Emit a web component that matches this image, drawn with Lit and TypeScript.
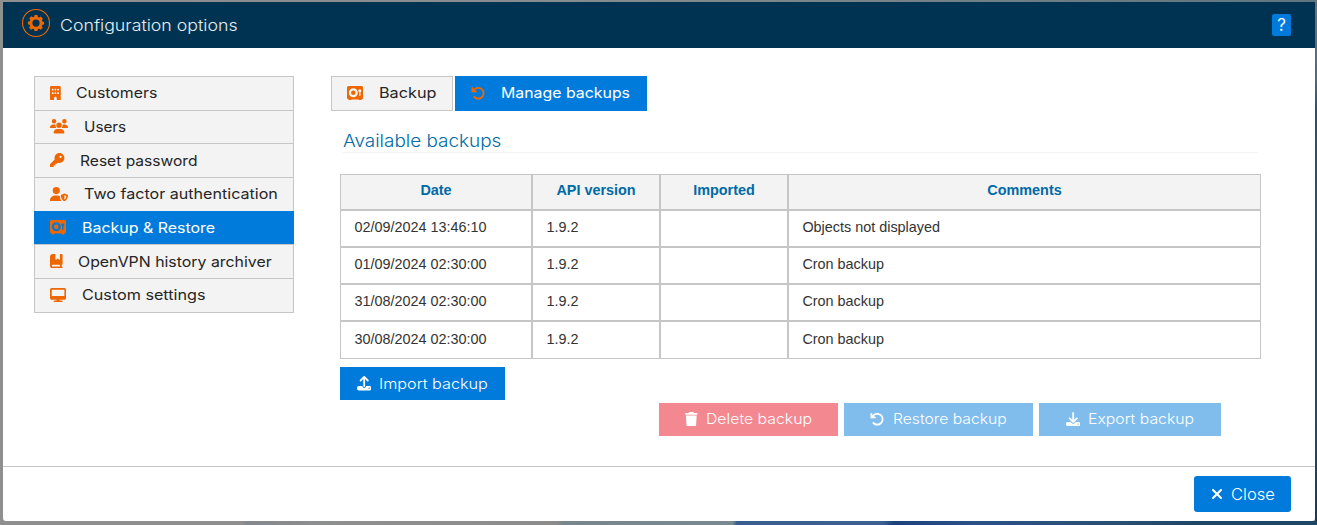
import { LitElement, html, svg, css } from "lit";
import { customElement, property } from "lit/decorators.js";
import { classMap } from "lit/directives/class-map.js";

type Icon = { w: number; h?: number; d: string };

const ICONS: Record<string, Icon> = {
  building: { w: 384, d: "M48 0C21.5 0 0 21.5 0 48V464c0 26.5 21.5 48 48 48h96V432c0-26.5 21.5-48 48-48s48 21.5 48 48v80h96c26.5 0 48-21.5 48-48V48c0-26.5-21.5-48-48-48H48zM64 240c0-8.8 7.2-16 16-16h32c8.8 0 16 7.2 16 16v32c0 8.8-7.2 16-16 16H80c-8.8 0-16-7.2-16-16V240zm112-16h32c8.8 0 16 7.2 16 16v32c0 8.8-7.2 16-16 16H176c-8.8 0-16-7.2-16-16V240c0-8.8 7.2-16 16-16zm80 16c0-8.8 7.2-16 16-16h32c8.8 0 16 7.2 16 16v32c0 8.8-7.2 16-16 16H272c-8.8 0-16-7.2-16-16V240zM80 96h32c8.8 0 16 7.2 16 16v32c0 8.8-7.2 16-16 16H80c-8.8 0-16-7.2-16-16V112c0-8.8 7.2-16 16-16zm80 16c0-8.8 7.2-16 16-16h32c8.8 0 16 7.2 16 16v32c0 8.8-7.2 16-16 16H176c-8.8 0-16-7.2-16-16V112zM272 96h32c8.8 0 16 7.2 16 16v32c0 8.8-7.2 16-16 16H272c-8.8 0-16-7.2-16-16V112c0-8.8 7.2-16 16-16z" },
  users: { w: 640, d: "M144 0a80 80 0 1 1 0 160A80 80 0 1 1 144 0zM512 0a80 80 0 1 1 0 160A80 80 0 1 1 512 0zM0 298.7C0 239.8 47.8 192 106.7 192h42.7c15.9 0 31 3.5 44.6 9.7c-1.3 7.2-1.9 14.7-1.9 22.3c0 38.2 16.8 72.5 43.3 96c-.2 0-.4 0-.7 0H21.3C9.6 320 0 310.4 0 298.7zM405.3 320c-.2 0-.4 0-.7 0c26.6-23.5 43.3-57.8 43.3-96c0-7.6-.7-15-1.9-22.3c13.6-6.3 28.7-9.7 44.6-9.7h42.7C592.2 192 640 239.8 640 298.7c0 11.8-9.6 21.3-21.3 21.3H405.3zM224 224a96 96 0 1 1 192 0 96 96 0 1 1 -192 0zM128 485.3C128 411.7 187.7 352 261.3 352H378.7C452.3 352 512 411.7 512 485.3c0 14.7-11.9 26.7-26.7 26.7H154.7c-14.7 0-26.7-11.9-26.7-26.7z" },
  key: { w: 512, d: "M336 352c97.2 0 176-78.8 176-176S433.2 0 336 0S160 78.8 160 176c0 18.7 2.9 36.8 8.3 53.7L7 391c-4.5 4.5-7 10.6-7 17v80c0 13.3 10.7 24 24 24h80c13.3 0 24-10.7 24-24V448h40c13.3 0 24-10.7 24-24V384h40c6.4 0 12.5-2.5 17-7l33.3-33.3c16.9 5.4 35 8.3 53.7 8.3zM376 96a40 40 0 1 1 0 80 40 40 0 1 1 0-80z" },
  userShield: { w: 640, d: "M224 0a128 128 0 1 1 0 256a128 128 0 1 1 0-256zM178 304h92c32 0 62 8 88 23v26c0 64 23 119 72 159H30c-17 0-30-13-30-30C0 384 80 304 178 304zM512 228l118 46c6 2 10 8 10 14c0 91-34 177-120 222c-5 3-11 3-16 0c-86-45-120-131-120-222c0-6 4-12 10-14zM512 292v154c42-26 62-70 65-128z" },
  vault: { w: 576, d: "M64 0C28.7 0 0 28.7 0 64V416c0 35.3 28.7 64 64 64l16 32h64l16-32H416l16 32h64l16-32c35.3 0 64-28.7 64-64V64c0-35.3-28.7-64-64-64H64zM224 80a160 160 0 1 1 0 320a160 160 0 1 1 0-320zM224 160a80 80 0 1 0 0 160a80 80 0 1 0 0-160zM480 221V336c0 9-7 16-16 16s-32-7-32-16V221c-19-10-32-31-32-53a56 56 0 1 1 112 0c0 22-13 43-32 53z" },
  book: { w: 448, d: "M0 96C0 43 43 0 96 0h96V190.7c0 13.4 15.5 20.9 26 12.5L272 160l54 43.2c10.5 8.4 26 .9 26-12.5V0h32 32c17.7 0 32 14.3 32 32V352c0 17.7-14.3 32-32 32v64c17.7 0 32 14.3 32 32s-14.3 32-32 32H384 96c-53 0-96-43-96-96V96zM64 416c0 17.7 14.3 32 32 32H352V384H96c-17.7 0-32 14.3-32 32z" },
  desktop: { w: 576, d: "M64 0C28.7 0 0 28.7 0 64V352c0 35.3 28.7 64 64 64H240l-10.7 32H160c-17.7 0-32 14.3-32 32s14.3 32 32 32H416c17.7 0 32-14.3 32-32s-14.3-32-32-32H346.7L336 416H512c35.3 0 64-28.7 64-64V64c0-35.3-28.7-64-64-64H64zM512 64V288H64V64H512z" },
  rotate: { w: 512, d: "M125.7 160H176c17.7 0 32 14.3 32 32s-14.3 32-32 32H48c-17.7 0-32-14.3-32-32V64c0-17.7 14.3-32 32-32s32 14.3 32 32v51.2L97.6 97.6c87.5-87.5 229.3-87.5 316.8 0s87.5 229.3 0 316.8s-229.3 87.5-316.8 0c-12.5-12.5-12.5-32.8 0-45.3s32.8-12.5 45.3 0c62.5 62.5 163.8 62.5 226.3 0s62.5-163.8 0-226.3s-163.8-62.5-226.3 0L125.7 160z" },
  trash: { w: 448, d: "M135.2 17.7L128 32H32C14.3 32 0 46.3 0 64S14.3 96 32 96H416c17.7 0 32-14.3 32-32s-14.3-32-32-32H320l-7.2-14.3C307.4 6.8 296.3 0 284.2 0H163.8c-12.1 0-23.2 6.8-28.6 17.7zM416 128H32L53.2 467c1.6 25.3 22.6 45 47.9 45H346.9c25.3 0 46.3-19.7 47.9-45L416 128z" },
  upload: { w: 512, d: "M288 109.3V352c0 17.7-14.3 32-32 32s-32-14.3-32-32V109.3l-73.4 73.4c-12.5 12.5-32.8 12.5-45.3 0s-12.5-32.8 0-45.3l128-128c12.5-12.5 32.8-12.5 45.3 0l128 128c12.5 12.5 12.5 32.8 0 45.3s-32.8 12.5-45.3 0L288 109.3zM64 352H192c0 35.3 28.7 64 64 64s64-28.7 64-64H448c35.3 0 64 28.7 64 64v32c0 35.3-28.7 64-64 64H64c-35.3 0-64-28.7-64-64V416c0-35.3 28.7-64 64-64zM432 456a24 24 0 1 0 0-48 24 24 0 1 0 0 48z" },
  download: { w: 512, d: "M288 32c0-17.7-14.3-32-32-32s-32 14.3-32 32V274.7l-73.4-73.4c-12.5-12.5-32.8-12.5-45.3 0s-12.5 32.8 0 45.3l128 128c12.5 12.5 32.8 12.5 45.3 0l128-128c12.5-12.5 12.5-32.8 0-45.3s-32.8-12.5-45.3 0L288 274.7V32zM64 352c-35.3 0-64 28.7-64 64v32c0 35.3 28.7 64 64 64H448c35.3 0 64-28.7 64-64V416c0-35.3-28.7-64-64-64H346.5l-45.3 45.3c-25 25-65.5 25-90.5 0L165.5 352H64zm368 56a24 24 0 1 1 0 48 24 24 0 1 1 0-48z" },
  xmark: { w: 384, d: "M342.6 150.6c12.5-12.5 12.5-32.8 0-45.3s-32.8-12.5-45.3 0L192 210.7 86.6 105.4c-12.5-12.5-32.8-12.5-45.3 0s-12.5 32.8 0 45.3L146.7 256 41.4 361.4c-12.5 12.5-12.5 32.8 0 45.3s32.8 12.5 45.3 0L192 301.3 297.4 406.6c12.5 12.5 32.8 12.5 45.3 0s12.5-32.8 0-45.3L237.3 256 342.6 150.6z" },
};

@customElement("ui-icon")
class UiIcon extends LitElement {
  @property() name = "";
  @property({ type: Number }) size = 14.4;
  static styles = css`
    :host { display: block; flex: none; line-height: 0; }
    .glyph { display: block; fill: currentColor; fill-rule: evenodd; }
  `;
  render() {
    const i = ICONS[this.name];
    return html`<svg class="glyph" width=${(this.size * i.w) / 512} height=${this.size} viewBox="0 0 ${i.w} 512">
      ${svg`<path d=${i.d}></path>`}
    </svg>`;
  }
}

/* A one-line label whose glyphs stretch to an exact advance width. */
@customElement("fit-label")
class FitLabel extends LitElement {
  @property() text = "";
  @property({ type: Number }) width = 0;
  static styles = css`
    :host { display: block; flex: none; white-space: nowrap; }
    .text { display: inline-block; transform-origin: 0 50%; }
  `;
  render() {
    return html`<span class="text">${this.text}</span>`;
  }
  updated() {
    const el = this.renderRoot.querySelector(".text") as HTMLElement;
    this.style.width = `${this.width}px`;
    el.style.transform = `scaleX(${this.width / el.offsetWidth})`;
  }
}

const MENU = [
  { icon: "building", text: "Customers", width: 81.5 },
  { icon: "users", text: "Users", width: 42.5 },
  { icon: "key", text: "Reset password", width: 118 },
  { icon: "userShield", text: "Two factor authentication", width: 193.5 },
  { icon: "vault", text: "Backup & Restore", width: 133 },
  { icon: "book", text: "OpenVPN history archiver", width: 194 },
  { icon: "desktop", text: "Custom settings", width: 123.5 },
];
const ACTIVE = "Backup & Restore";

const COLUMNS = ["Date", "API version", "Imported", "Comments"];
const ROWS = [
  ["02/09/2024 13:46:10", "1.9.2", "", "Objects not displayed"],
  ["01/09/2024 02:30:00", "1.9.2", "", "Cron backup"],
  ["31/08/2024 02:30:00", "1.9.2", "", "Cron backup"],
  ["30/08/2024 02:30:00", "1.9.2", "", "Cron backup"],
];

@customElement("app-root")
class AppRoot extends LitElement {
  static styles = css`
    :host {
      display: block;
      box-sizing: border-box;
      height: 525px;
      padding: 2px 2px 4px 3px;
      overflow: hidden;
      font-family: Inter, sans-serif;
      font-size: 14.4px;
      color: #262626;
      background:
        linear-gradient(100deg, #8f8f8f 238px, #83898e 244px, #8f8f8f 330px, #8c8c8c 548px, #78858d 556px, #7b8990 722px, #3a5f8f 726px, #3c6090 870px, #1c437b 880px, #2a5286 960px, #2a4f74 1100px, #1d4565 1190px, #1d4565 1317px) 0 100% / 100% 4px no-repeat,
        linear-gradient(180deg, #62777f 0, #4a6c7f 80px, #2b506f 110px, #244a6b 420px, #183956 525px) 100% 0 / 2px 100% no-repeat,
        linear-gradient(90deg, #8f8f8f, #858c8e 600px, #5f757d) 0 0 / 100% 2px no-repeat,
        #8f8f8f;
    }
    * { box-sizing: border-box; }
    .dialog { display: flex; flex-direction: column; height: 519px; background: #fff; border-radius: 0 0 3px 3px; overflow: hidden; }
    .header { display: flex; align-items: center; flex: none; height: 46px; padding: 0 24px 0 18px; background: #003351; color: #e6edf2; font-size: 15.8px; font-weight: 300; }
    .logo { display: block; margin: -4px 9px 0 0; }
    .help { display: grid; place-items: center; width: 19px; height: 22px; margin-left: auto; border-radius: 2px; background: #007bdb; color: #fff; font-size: 17px; font-weight: 400; }
    .body { display: flex; flex: 1; padding: 28px 0 0 31px; }
    .menu { display: grid; grid-template-rows: repeat(7, 33.7px); width: 260px; height: 237px; flex: none; }
    .item { display: flex; align-items: center; gap: 15.4px; height: 34.7px; padding: 0 0 1px 15.3px; border: 1px solid #c6c6c6; background: #f3f3f3; font-weight: 400; }
    .orange { color: #ee6702; }
    .active { background: #007bdb; border-color: #007bdb; color: #fff; }
    .main { width: 930px; margin-left: 37px; }
    .tabs { display: flex; gap: 2px; }
    .tab { display: flex; align-items: center; gap: 15.4px; width: 122px; height: 35px; padding: 0 0 1px 15.3px; border: 1px solid #c6c6c6; background: #f3f3f3; }
    .tab fit-label { margin-top: -1px; }
    .tab.active { width: 192px; background: #007bdb; border-color: #007bdb; }
    .legend { display: flex; width: 915px; height: 42px; margin-left: 12px; padding-top: 19px; border-bottom: 1px solid #f3f3f3; color: #006aa7; font-size: 17px; line-height: 22px; font-weight: 300; }
    .table { display: grid; grid-template-columns: 192px 128px 128px 473px; grid-template-rows: 36px 37px 37px 37px 38px; width: 921px; margin: 21px 0 0 9px; font-family: "Liberation Sans", sans-serif; font-size: 14.4px; color: #333; }
    .cell { display: flex; align-items: center; padding: 0 13.4px 3px; border: 1px solid #c6c6c6; }
    .head { justify-content: center; padding-bottom: 4px; background: #f3f3f3; color: #006aa7; font-weight: 700; }
    .btn { display: flex; align-items: center; gap: 8px; height: 33px; background: #007bdb; color: #fff; font-size: 14.4px; font-weight: 300; }
    .import { width: 165px; margin: 8px 0 0 9px; padding-left: 17px; }
    .actions { display: flex; gap: 6px; margin: 3px 0 0 328px; }
    .off { width: 182px; padding: 0 0 1px 27px; background: #80bdec; }
    .off fit-label { margin-top: -1px; }
    .restore { width: 189px; padding-left: 26.3px; }
    .danger { width: 179px; padding-left: 26px; background: #f48891; }
    .footer { display: flex; justify-content: flex-end; flex: none; height: 55px; padding: 9px 24px 0 0; border-top: 1px solid #c6c6c6; }
    .close { width: 97px; height: 36px; padding-left: 17px; border-radius: 3px; font-size: 15.8px; gap: 7.5px; }
  `;

  render() {
    return html`
      <div class="dialog">
        <div class="header">
          <svg class="logo" width="30" height="30" viewBox="0 0 30 30">
            <circle cx="15" cy="15" r="13.5" fill="none" stroke="#ee6702" stroke-width="1.1"></circle>
            <path fill="#ee6702" fill-rule="evenodd" d="M13.5 7h3l.5 1.9 1.1.5 1.8-1 2 2-1 1.8.5 1.2 1.7.5v2.4l-1.8.6-.5 1.1 1 1.8-2 2-1.8-1-1.1.5-.5 1.7h-2.9l-.5-1.8-1.1-.5-1.8 1-2-2 1-1.8-.5-1.1-1.7-.6v-2.4l1.8-.5.5-1.2-1-1.8 2-2 1.8 1 1.1-.5zM15 11.5a3.6 3.6 0 1 0 0 7.2a3.6 3.6 0 0 0 0-7.2z"></path>
          </svg>
          <fit-label text="Configuration options" width="177.5"></fit-label>
          <div class="help">?</div>
        </div>
        <div class="body">
          <div class="menu">
            ${MENU.map((m) => html`
              <div class=${classMap({ item: true, active: m.text === ACTIVE })}>
                <ui-icon class="orange" name=${m.icon}></ui-icon>
                <fit-label text=${m.text} width=${m.width}></fit-label>
              </div>`)}
          </div>
          <div class="main">
            <div class="tabs">
              <div class="tab">
                <ui-icon class="orange" name="vault"></ui-icon>
                <fit-label text="Backup" width="57.5"></fit-label>
              </div>
              <div class="tab active">
                <ui-icon class="orange" name="rotate"></ui-icon>
                <fit-label text="Manage backups" width="129"></fit-label>
              </div>
            </div>
            <div class="legend"><fit-label text="Available backups" width="158"></fit-label></div>
            <div class="table">
              ${COLUMNS.map((c) => html`<div class="cell head">${c}</div>`)}
              ${ROWS.map((r) => r.map((c) => html`<div class="cell">${c}</div>`))}
            </div>
            <div class="btn import">
              <ui-icon name="upload"></ui-icon>
              <fit-label text="Import backup" width="109"></fit-label>
            </div>
            <div class="actions">
              <div class="btn off danger">
                <ui-icon name="trash"></ui-icon>
                <fit-label text="Delete backup" width="105.5"></fit-label>
              </div>
              <div class="btn off restore">
                <ui-icon name="rotate"></ui-icon>
                <fit-label text="Restore backup" width="113.5"></fit-label>
              </div>
              <div class="btn off">
                <ui-icon name="download"></ui-icon>
                <fit-label text="Export backup" width="106.5"></fit-label>
              </div>
            </div>
          </div>
        </div>
        <div class="footer">
          <div class="btn close">
            <ui-icon name="xmark" size="16"></ui-icon>
            <fit-label text="Close" width="44"></fit-label>
          </div>
        </div>
      </div>
    `;
  }
}
